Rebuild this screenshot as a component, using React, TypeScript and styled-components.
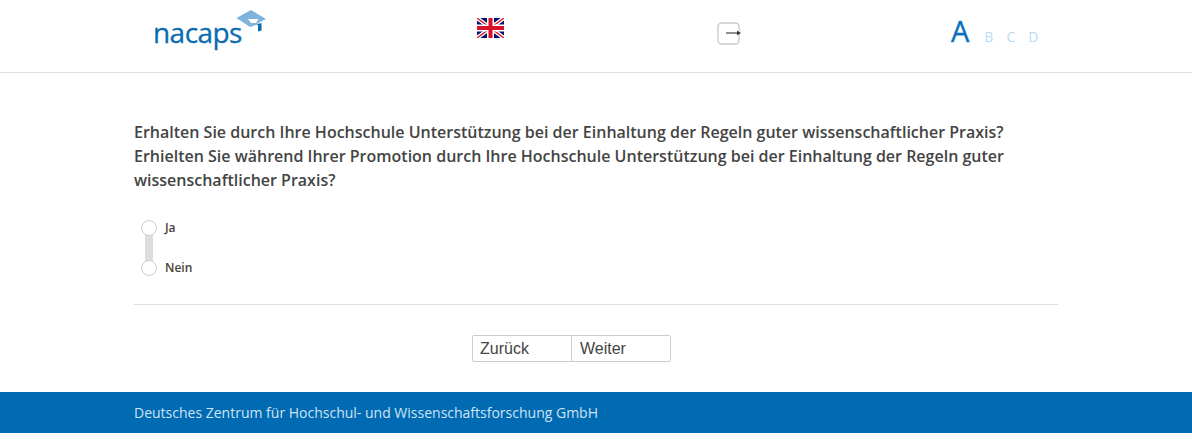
import styled, { createGlobalStyle } from "styled-components";

const GlobalStyle = createGlobalStyle`
  html, body {
    margin: 0;
    padding: 0;
    background: #fff;
    font-family: "Open Sans", sans-serif;
    color: #444;
  }
`;

const Header = styled.header`
  height: 72px;
  box-sizing: content-box;
  border-bottom: 1px solid #ddd;
  padding-left: 153px;
  display: grid;
  grid-template-columns: 324px 240px 234px auto;
`;

const Logo = styled.div`
  position: relative;
  width: 112px;
  height: 50px;
  padding-top: 12px;
  box-sizing: border-box;
`;

const LogoText = styled.span`
  font-size: 28px;
  line-height: 40px;
  color: #0a6cb0;
  letter-spacing: -0.55px;
  -webkit-text-stroke: 0.3px #0a6cb0;
`;

const LogoCap = styled.div`
  position: absolute;
  left: 81px;
  top: 10px;
`;

const FlagLink = styled.a`
  display: block;
  padding-top: 18px;
  height: 20px;
`;

const LoginLink = styled.a`
  display: block;
  padding-top: 22px;
`;

const Sizes = styled.div`
  display: flex;
  align-items: baseline;
  height: 44px;
  padding-top: 11px;
`;

const SizeOption = styled.span<{ $active?: boolean }>`
  font-size: ${(p) => (p.$active ? "29px" : "14px")};
  line-height: 40px;
  color: ${(p) => (p.$active ? "#0a70c0" : "#bcdaf0")};
  margin-right: ${(p) => (p.$active ? "15px" : "13px")};
  -webkit-text-stroke: ${(p) => (p.$active ? "0.4px #0a70c0" : "0")};
`;

const Main = styled.main`
  width: 924px;
  margin-left: 134px;
  padding-top: 47px;
`;

const Question = styled.h2`
  margin: 0;
  font-size: 16px;
  font-weight: 600;
  line-height: 24px;
  color: #444;
`;

const Options = styled.div`
  position: relative;
  display: flex;
  flex-direction: column;
  gap: 24px;
  margin-top: 28px;
  margin-left: 7px;
`;

const Rail = styled.div`
  position: absolute;
  left: 4px;
  top: 8px;
  width: 8px;
  height: 40px;
  background: #ddd;
`;

const OptionRow = styled.label`
  position: relative;
  display: flex;
  align-items: center;
  height: 16px;
  gap: 8px;
  font-size: 12px;
  font-weight: 600;
  color: #4a4038;
`;

const OptionLabel = styled.span`
  margin-top: -2px;
`;

const Radio = styled.span`
  width: 16px;
  height: 16px;
  box-sizing: border-box;
  border: 1px solid #ccc;
  border-radius: 50%;
  background: #fff;
`;

const Divider = styled.hr`
  margin: 28px 0 0;
  border: 0;
  border-top: 1px solid #ddd;
`;

const Buttons = styled.div`
  display: flex;
  justify-content: center;
  margin-top: 30px;
  padding-right: 49px;
`;

const NavButton = styled.button`
  width: 100px;
  height: 27px;
  padding: 0 0 0 8px;
  text-align: left;
  background: #fff;
  border: 1px solid #ccc;
  font-family: "Liberation Sans", Arial, sans-serif;
  font-size: 16px;
  color: #444;
  &:first-child {
    padding-left: 7px;
    border-radius: 2px 0 0 2px;
  }
  &:last-child {
    margin-left: -1px;
    border-radius: 0 2px 2px 0;
  }
`;

const Footer = styled.footer`
  margin-top: 30px;
  height: 41px;
  background: #006ab3;
  padding-left: 134px;
  font-size: 14px;
  line-height: 41px;
  color: #cfe3f2;
`;

const UnionJack = () => (
  <svg width="27" height="20" viewBox="0 0 27 20">
    <rect width="27" height="20" fill="#00106e" />
    <path d="M0 0L27 20M27 0L0 20" stroke="#fff" strokeWidth="4" />
    <path d="M0 0L27 20M27 0L0 20" stroke="#d8112a" strokeWidth="1.4" />
    <path d="M13.5 0V20M0 10H27" stroke="#fff" strokeWidth="7" />
    <path d="M13.5 0V20M0 10H27" stroke="#d8112a" strokeWidth="4" />
  </svg>
);

const LoginIcon = () => (
  <svg width="25" height="23" viewBox="0 0 25 23">
    <rect x="1" y="1" width="21" height="21" rx="3.5" fill="#fff" stroke="#ccc" strokeWidth="1.4" />
    <rect x="9" y="10.4" width="13" height="1.2" fill="#444" />
    <path d="M20 8.8L24 11L20 13.2Z" fill="#333" />
  </svg>
);

const Cap = () => (
  <svg width="34" height="28" viewBox="0 0 34 28">
    <path d="M2.5 8L17 0L32 9L23 13.5H27L16 17Z" fill="#80b3dc" />
    <path d="M14 9H24.5L22 13H17Z" fill="#fff" />
    <path d="M23 14.5L27.5 13V20.5L24 21.5V15.5Z" fill="#0a6cb0" />
  </svg>
);

export default function App() {
  return (
    <>
      <GlobalStyle />
      <Header>
        <Logo>
          <LogoText>nacaps</LogoText>
          <LogoCap>
            <Cap />
          </LogoCap>
        </Logo>
        <FlagLink>
          <UnionJack />
        </FlagLink>
        <LoginLink>
          <LoginIcon />
        </LoginLink>
        <Sizes>
          <SizeOption $active>A</SizeOption>
          <SizeOption>B</SizeOption>
          <SizeOption>C</SizeOption>
          <SizeOption>D</SizeOption>
        </Sizes>
      </Header>
      <Main>
        <Question>
          Erhalten Sie durch Ihre Hochschule Unterstützung bei der Einhaltung der Regeln guter wissenschaftlicher Praxis?
          <br />
          Erhielten Sie während Ihrer Promotion durch Ihre Hochschule Unterstützung bei der Einhaltung der Regeln guter wissenschaftlicher Praxis?
        </Question>
        <Options>
          <Rail />
          <OptionRow>
            <Radio />
            <OptionLabel>Ja</OptionLabel>
          </OptionRow>
          <OptionRow>
            <Radio />
            <OptionLabel>Nein</OptionLabel>
          </OptionRow>
        </Options>
        <Divider />
        <Buttons>
          <NavButton>Zurück</NavButton>
          <NavButton>Weiter</NavButton>
        </Buttons>
      </Main>
      <Footer>Deutsches Zentrum für Hochschul- und Wissenschaftsforschung GmbH</Footer>
    </>
  );
}
